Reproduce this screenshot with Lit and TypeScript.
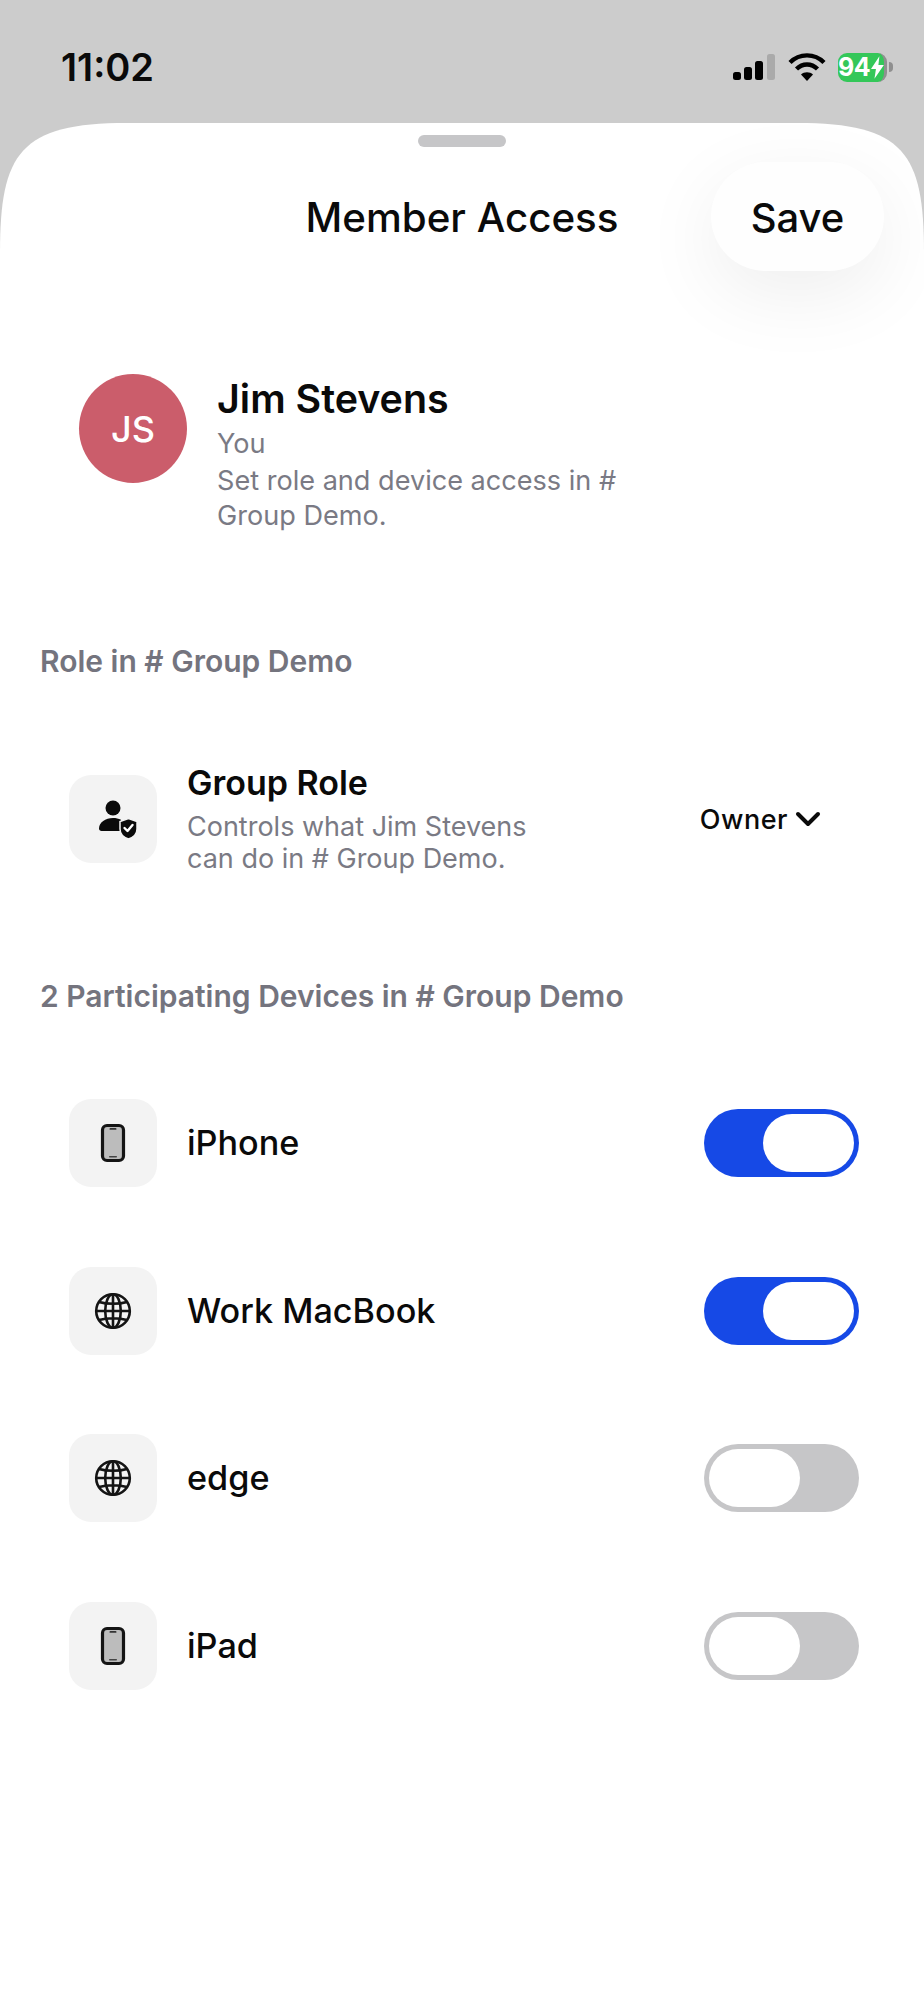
import { html, css, LitElement, svg } from 'lit';
import { customElement } from 'lit/decorators.js';

type DeviceKind = 'phone' | 'globe';
interface Device {
  name: string;
  kind: DeviceKind;
  on: boolean;
}

const DEVICES: Device[] = [
  { name: 'iPhone', kind: 'phone', on: true },
  { name: 'Work MacBook', kind: 'globe', on: true },
  { name: 'edge', kind: 'globe', on: false },
  { name: 'iPad', kind: 'phone', on: false },
];

const personIcon = svg`<svg width="48" height="48" viewBox="0 0 48 48">
  <circle cx="24" cy="13" r="7.5" fill="#0a0a0a"/>
  <path d="M10 33.5c0-6 6.5-10.5 14-10.5 3 0 5.500.6 8 1.800V36H12.500C11 36 10 35 10 33.500Z" fill="#0a0a0a"/>
  <path d="M39.500 23.500l8.500 3v7.500c0 5-4 8.500-8.500 10-4.500-1.500-8.500-5-8.500-10v-7.500Z" fill="#0a0a0a" stroke="#f3f3f3" stroke-width="1.500"/>
  <path d="M35.500 33l3 3 5-6" fill="none" stroke="#fff" stroke-width="2.400" stroke-linecap="round" stroke-linejoin="round"/>
</svg>`;

const phoneIcon = svg`<svg width="28" height="42" viewBox="0 0 28 42">
  <rect x="3.500" y="3.500" width="21" height="35" rx="4.500" fill="#bcbcbc" stroke="#141414" stroke-width="3.200"/>
  <rect x="10.500" y="6" width="7" height="1.800" rx=".9" fill="#333"/>
  <rect x="10" y="34" width="8" height="1.400" rx=".7" fill="#444"/>
</svg>`;

const globeIcon = svg`<svg width="40" height="40" viewBox="0 0 40 40" fill="none" stroke="#141414" stroke-width="2.600">
  <circle cx="20" cy="20" r="16.800"/>
  <ellipse cx="20" cy="20" rx="7.800" ry="16.800"/>
  <path d="M20 3.200v33.600M3.200 20h33.600M6 11c8 2.400 20 2.400 28 0M6 29c8-2.400 20-2.400 28 0"/>
</svg>`;

@customElement('app-root')
export class AppRoot extends LitElement {
  static styles = css`
    :host {
      display: block;
      width: 924px;
      height: 1999px;
      background: #cccccc;
      font-family: Inter, 'Liberation Sans', sans-serif;
      color: #0a0a0a;
      overflow: hidden;
    }

    .status {
      height: 123px;
      box-sizing: border-box;
      padding: 11px 31px 0 61px;
      display: flex;
      align-items: center;
      justify-content: space-between;
    }

    .time {
      font-size: 38px;
      font-weight: 600;
      line-height: 44px;
    }

    .status-icons {
      display: flex;
      align-items: center;
      gap: 12px;
    }

    .battery {
      display: flex;
      align-items: center;
      gap: 2px;
    }

    .battery-body {
      width: 49px;
      height: 29px;
      box-sizing: border-box;
      border-radius: 9px;
      background: #34c759;
      border-right: 3px solid #8f8f8f;
      display: flex;
      align-items: center;
      justify-content: center;
      gap: 1px;
      color: #fff;
      font-size: 25px;
      font-weight: 700;
      letter-spacing: -0.5px;
    }

    .battery-nub {
      width: 4px;
      height: 10px;
      border-radius: 0 4px 4px 0;
      background: #8f8f8f;
    }

    .sheet {
      height: 1876px;
      box-sizing: border-box;
      background: #fff;
      clip-path: path('M0 130C0 30 20 0 127 0H797C904 0 924 30 924 130V1876H0Z');
      display: flex;
      flex-direction: column;
      padding-top: 12px;
    }

    .handle {
      align-self: center;
      width: 88px;
      height: 12px;
      border-radius: 6px;
      background: #c6c6c8;
    }

    .header {
      display: grid;
      grid-template-columns: 1fr auto 1fr;
      align-items: center;
      margin-top: 15px;
    }

    .title {
      grid-column: 2;
      padding-top: 2px;
      font-size: 40.300px;
      font-weight: 500;
      line-height: 46px;
    }

    .save {
      grid-column: 3;
      justify-self: end;
      box-sizing: border-box;
      margin-right: 40px;
      padding-top: 2px;
      width: 173px;
      height: 109px;
      border-radius: 55px;
      background: #fefefe;
      box-shadow: 0 22px 80px rgba(0, 0, 0, 0.07);
      display: flex;
      align-items: center;
      justify-content: center;
      font-size: 40px;
      font-weight: 500;
    }

    .profile {
      display: flex;
      align-items: flex-start;
      gap: 30px;
      margin: 103px 0 0 79px;
    }

    .avatar {
      width: 108px;
      height: 109px;
      border-radius: 50%;
      flex: none;
      background: #cb5d6b;
      color: #fff;
      font-size: 36px;
      font-weight: 500;
      display: flex;
      align-items: center;
      justify-content: center;
    }

    .name {
      font-size: 39.400px;
      font-weight: 600;
      line-height: 46px;
      margin-top: 2px;
    }

    .muted {
      color: #7a7a84;
      font-size: 27.100px;
    }

    .you {
      margin-top: 3px;
      line-height: 37px;
    }

    .about {
      margin-top: 1px;
      line-height: 35px;
    }

    .section {
      margin: 110px 0 0 40px;
      color: #74747e;
      font-size: 30px;
      font-weight: 600;
      line-height: 36px;
    }

    .icon-box {
      width: 88px;
      height: 88px;
      flex: none;
      border-radius: 22px;
      background: #f3f3f3;
      display: flex;
      align-items: center;
      justify-content: center;
    }

    .row {
      display: flex;
      align-items: center;
      margin-left: 69px;
      width: 790px;
    }

    .row-text {
      flex: 1;
      margin-left: 30px;
    }

    .role-row {
      margin-top: 84px;
    }

    .row-title {
      font-size: 34.200px;
      font-weight: 550;
      line-height: 40px;
    }

    .row-title.strong {
      font-size: 34px;
      font-weight: 600;
    }

    .desc {
      margin-top: 8px;
      font-size: 27px;
      line-height: 32px;
      color: #7a7a84;
    }

    .owner {
      display: flex;
      align-items: center;
      gap: 7px;
      font-size: 27px;
      font-weight: 500;
      letter-spacing: 0.5px;
      margin-right: 38px;
    }

    .section.devices {
      margin-top: 103px;
    }

    .device-list {
      display: flex;
      flex-direction: column;
      gap: 79.500px;
      margin-top: 85px;
    }

    .toggle {
      width: 155px;
      height: 68px;
      box-sizing: border-box;
      padding: 5px;
      border-radius: 34px;
      background: #c6c6c8;
      display: flex;
    }

    .toggle.on {
      background: #1649e6;
      justify-content: flex-end;
    }

    .knob {
      width: 91px;
      height: 58px;
      border-radius: 29px;
      background: #fff;
    }
  `;

  render() {
    return html`
      <div class="status">
        <div class="time">11:02</div>
        <div class="status-icons">
          <svg width="44" height="28" viewBox="0 0 44 28">
            <rect x="1" y="19" width="8" height="8" rx="2.500" fill="#000"/>
            <rect x="12" y="14" width="8" height="13" rx="2.500" fill="#000"/>
            <rect x="23" y="8" width="8" height="19" rx="2.500" fill="#000"/>
            <rect x="35" y="1" width="8" height="26" rx="2.500" fill="#aaa"/>
          </svg>
          <svg width="38" height="28" viewBox="0 0 38 28" fill="none" stroke="#000" stroke-width="4.400">
            <path d="M2 9.500C11.500 0 26.500 0 36 9.500"/>
            <path d="M8.500 16c6-6 15-6 21 0"/>
            <path d="M19 28l-6-6.500c3-3 9-3 12 0Z" fill="#000" stroke="none"/>
          </svg>
          <div class="battery">
            <div class="battery-body">
              <span>94</span>
              <svg width="13" height="23" viewBox="0 0 13 23"><path d="M8.500 0L0 13h5l-1.500 10L13 9H7.500Z" fill="#fff"/></svg>
            </div>
            <div class="battery-nub"></div>
          </div>
        </div>
      </div>

      <div class="sheet">
        <div class="handle"></div>
        <div class="header">
          <div class="title">Member Access</div>
          <div class="save">Save</div>
        </div>

        <div class="profile">
          <div class="avatar">JS</div>
          <div>
            <div class="name">Jim Stevens</div>
            <div class="muted you">You</div>
            <div class="muted about">Set role and device access in #<br />Group Demo.</div>
          </div>
        </div>

        <div class="section">Role in # Group Demo</div>
        <div class="row role-row">
          <div class="icon-box">${personIcon}</div>
          <div class="row-text">
            <div class="row-title strong">Group Role</div>
            <div class="desc">Controls what Jim Stevens<br />can do in # Group Demo.</div>
          </div>
          <div class="owner">
            Owner
            <svg width="26" height="16" viewBox="0 0 26 16" fill="none" stroke="#0a0a0a" stroke-width="4" stroke-linecap="round" stroke-linejoin="round">
              <path d="M3 3l10 10L23 3"/>
            </svg>
          </div>
        </div>

        <div class="section devices">2 Participating Devices in # Group Demo</div>
        <div class="device-list">
          ${DEVICES.map(
            (d) => html`
              <div class="row">
                <div class="icon-box">${d.kind === 'phone' ? phoneIcon : globeIcon}</div>
                <div class="row-text row-title">${d.name}</div>
                <div class="toggle ${d.on ? 'on' : ''}"><div class="knob"></div></div>
              </div>
            `,
          )}
        </div>
      </div>
    `;
  }
}

declare global {
  interface HTMLElementTagNameMap {
    'app-root': AppRoot;
  }
}
